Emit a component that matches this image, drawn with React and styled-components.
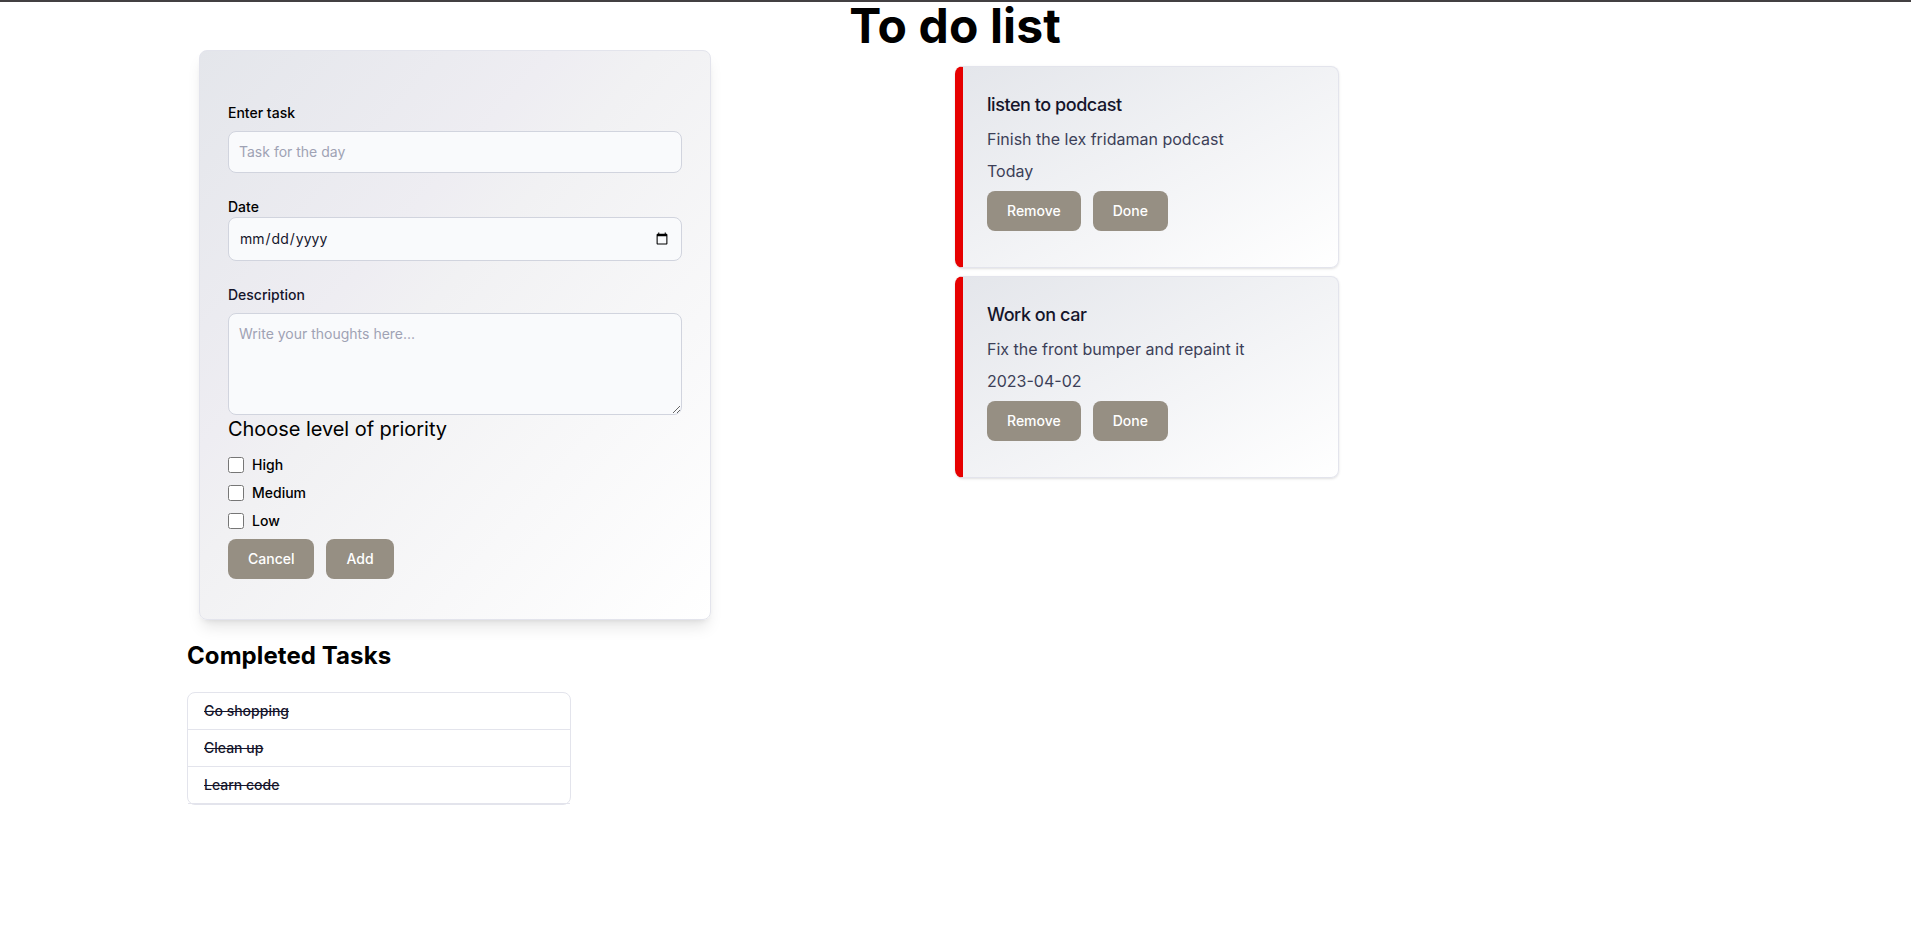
import React from "react";
import styled, { createGlobalStyle } from "styled-components";

const GlobalStyle = createGlobalStyle`
  *, *::before, *::after { box-sizing: border-box; }
  body { margin: 0; background: #fff; color: #000; font-family: Inter, "Liberation Sans", sans-serif; font-size: 16px; line-height: 24px; }
  h1, h2, h3, p, ul { margin: 0; padding: 0; }
  input, textarea, button { font-family: inherit; margin: 0; }
`;

const Page = styled.div`
  min-height: 942px;
  border-top: 2px solid #434042;
`;

const PageTitle = styled.h1`
  height: 48px;
  font-size: 48px;
  line-height: 48px;
  font-weight: 700;
  letter-spacing: 0.1px;
  padding-right: 1px;
  text-align: center;
`;

const Columns = styled.main`
  display: grid;
  grid-template-columns: 955px 1fr;
  align-items: start;
`;

const FormColumn = styled.div`
  padding-left: 187px;
`;

const FormCard = styled.form`
  width: 512px;
  height: 570px;
  margin-left: 12px;
  padding: 52px 28px 0;
  border: 1px solid #e3e4ec;
  border-radius: 8px;
  background: linear-gradient(to bottom right, #e4e6eb, #eeedf2 35%, #f1f1f3 45%, #fff);
  box-shadow: 0 10px 15px -3px rgba(0, 0, 0, 0.1), 0 4px 6px -4px rgba(0, 0, 0, 0.1);
`;

const Field = styled.div`
  margin-bottom: ${(p) => p.$gap}px;
`;

const Label = styled.label`
  display: block;
  margin-bottom: ${(p) => (p.$tight ? 0 : 8)}px;
  font-size: 14px;
  line-height: 20px;
  font-weight: 500;
  color: ${(p) => p.$color || "#000"};
`;

const Input = styled.input`
  display: block;
  width: 100%;
  height: ${(p) => p.$height}px;
  padding: ${(p) => (p.type === "date" ? "10px" : "9px 10px 11px")};
  border: 1px solid #d1d4de;
  border-radius: 8px;
  background: #f9fafc;
  color: #15152b;
  font-size: 14px;
  line-height: 20px;
  &::placeholder { color: #9fa2b4; }
`;

const TextArea = styled.textarea`
  display: block;
  width: 100%;
  height: 102px;
  padding: 10px;
  border: 1px solid #d1d4de;
  border-radius: 8px;
  background: #f9fafc;
  font-size: 14px;
  line-height: 20px;
  &::placeholder { color: #9fa2b4; }
`;

const PriorityTitle = styled.p`
  font-size: 20px;
  line-height: 28px;
  letter-spacing: -0.05px;
  margin-bottom: 12px;
`;

const PriorityRow = styled.label`
  display: flex;
  align-items: center;
  gap: 8px;
  margin-bottom: 8px;
  font-size: 14px;
  line-height: 20px;
  font-weight: 500;
`;

const Checkbox = styled.input`
  width: 16px;
  height: 16px;
`;

const ButtonRow = styled.div`
  display: flex;
  gap: 12px;
`;

const Button = styled.button`
  height: 40px;
  padding: 10px 20px;
  border: 0;
  border-radius: 8px;
  background: #968f83;
  color: #fff;
  font-size: 14px;
  line-height: 20px;
  font-weight: 500;
`;

const SectionTitle = styled.h2`
  margin: 20px 0;
  font-size: 24px;
  line-height: 32px;
  font-weight: 700;
  letter-spacing: 0.08px;
`;

const DoneList = styled.ul`
  width: 384px;
  border: 1px solid #e3e4ec;
  border-radius: 8px;
  list-style: none;
`;

const DoneItem = styled.li`
  padding: 8px 16px;
  border-bottom: 1px solid #e3e4ec;
  font-size: 14px;
  line-height: 20px;
  font-weight: 500;
  color: #15152b;
  text-decoration: line-through;
`;

const TaskColumn = styled.div`
  display: grid;
  gap: 8px;
  padding-top: 16px;
`;

const TaskCard = styled.article`
  width: 384px;
  height: 202px;
  padding: 24px;
  border: 1px solid #e3e4ec;
  border-left: 8px solid #e60000;
  border-radius: 8px;
  background: linear-gradient(to bottom right, #e4e6eb, #fff);
  box-shadow: 0 1px 3px 0 rgba(0, 0, 0, 0.1), 0 1px 2px -1px rgba(0, 0, 0, 0.1);
`;

const TaskTitle = styled.h3`
  margin-bottom: 8px;
  font-size: 18px;
  line-height: 28px;
  font-weight: 500;
  letter-spacing: -0.025em;
  color: #15152b;
`;

const TaskText = styled.p`
  margin-bottom: 8px;
  color: #3c3f58;
`;

const tasks = [
  { title: "listen to podcast", text: "Finish the lex fridaman podcast", date: "Today" },
  { title: "Work on car", text: "Fix the front bumper and repaint it", date: "2023-04-02" },
];

export default function App() {
  return (
    <Page>
      <GlobalStyle />
      <PageTitle>To do list</PageTitle>
      <Columns>
        <FormColumn>
          <FormCard>
            <Field $gap={24}>
              <Label htmlFor="task">Enter task</Label>
              <Input id="task" type="text" placeholder="Task for the day" $height={42} />
            </Field>
            <Field $gap={24}>
              <Label htmlFor="date" $tight>Date</Label>
              <Input id="date" type="date" $height={44} />
            </Field>
            <Field $gap={0}>
              <Label htmlFor="description" $color="#15152b">Description</Label>
              <TextArea id="description" placeholder="Write your thoughts here..." />
            </Field>
            <PriorityTitle>Choose level of priority</PriorityTitle>
            {["High", "Medium", "Low"].map((level) => (
              <PriorityRow key={level}>
                <Checkbox type="checkbox" />
                {level}
              </PriorityRow>
            ))}
            <ButtonRow>
              <Button type="button">Cancel</Button>
              <Button type="button">Add</Button>
            </ButtonRow>
          </FormCard>
          <SectionTitle>Completed Tasks</SectionTitle>
          <DoneList>
            {["Go shopping", "Clean up", "Learn code"].map((name) => (
              <DoneItem key={name}>{name}</DoneItem>
            ))}
          </DoneList>
        </FormColumn>
        <TaskColumn>
          {tasks.map((task) => (
            <TaskCard key={task.title}>
              <TaskTitle>{task.title}</TaskTitle>
              <TaskText>{task.text}</TaskText>
              <TaskText>{task.date}</TaskText>
              <ButtonRow>
                <Button type="button">Remove</Button>
                <Button type="button">Done</Button>
              </ButtonRow>
            </TaskCard>
          ))}
        </TaskColumn>
      </Columns>
    </Page>
  );
}
